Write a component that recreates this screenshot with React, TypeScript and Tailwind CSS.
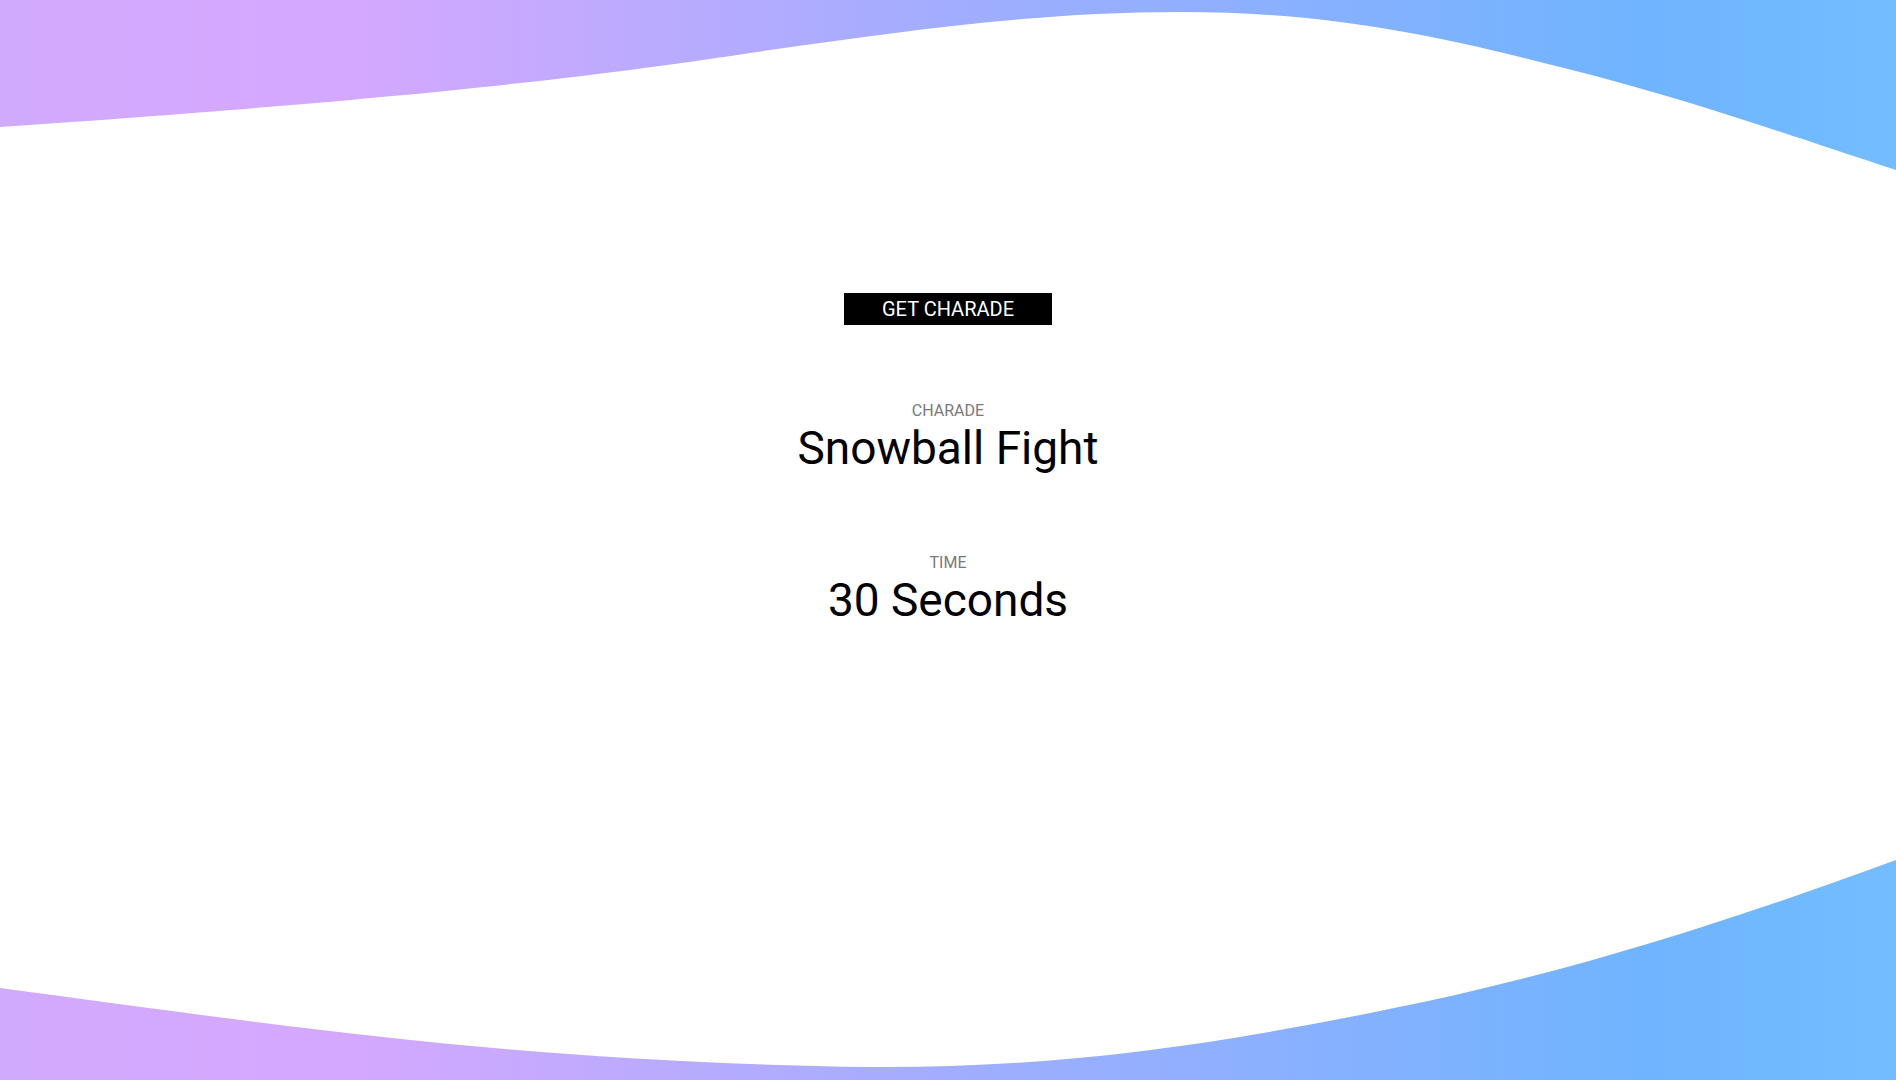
import React, { useState } from 'react';

const charades = ['Snowball Fight', 'Building a Snowman', 'Ice Skating', 'Sledding', 'Wrapping Presents'];

const Waves: React.FC = () => (
  <svg
    className="absolute inset-0 w-full h-full pointer-events-none"
    viewBox="0 0 1896 1080"
    preserveAspectRatio="none"
  >
    <defs>
      <linearGradient id="wave" x1="0" y1="0" x2="1896" y2="0" gradientUnits="userSpaceOnUse">
        <stop offset="0" stopColor="#d0aafd" />
        <stop offset="0.18" stopColor="#d5a8ff" />
        <stop offset="0.5" stopColor="#a2adfe" />
        <stop offset="0.87" stopColor="#6fb4ff" />
        <stop offset="1" stopColor="#73bdff" />
      </linearGradient>
    </defs>
    <path
      d="M0 0 H1896 V170 C1780 132 1690 100 1572 70 C1440 36 1330 12 1179 12 C1040 12 910 30 770 50 C610 74 450 96 0 127 Z"
      fill="url(#wave)"
    />
    <path
      d="M0 988 C300 1028 520 1062 871 1067 C1060 1068 1220 1046 1451 996 C1610 960 1760 910 1896 860 V1080 H0 Z"
      fill="url(#wave)"
    />
  </svg>
);

export default function App() {
  const [idx, setIdx] = useState(0);

  return (
    <div className="relative min-h-screen w-full overflow-hidden bg-white font-['Roboto',sans-serif]">
      <Waves />
      <div className="relative flex flex-col items-center pt-[293px]">
        <button
          className="h-[32px] w-[208px] bg-black text-white text-[20px] leading-none flex items-center justify-center"
          onClick={() => setIdx((idx + 1) % charades.length)}
        >
          GET CHARADE
        </button>

        <div className="mt-[78px] text-[16px] leading-none text-[#7a7a7a]">CHARADE</div>
        <div className="mt-[6px] text-[46px] leading-none text-black">{charades[idx]}</div>

        <div className="mt-[84px] text-[16px] leading-none text-[#7a7a7a]">TIME</div>
        <div className="mt-[6px] text-[46px] leading-none text-black">30 Seconds</div>
      </div>
    </div>
  );
}
